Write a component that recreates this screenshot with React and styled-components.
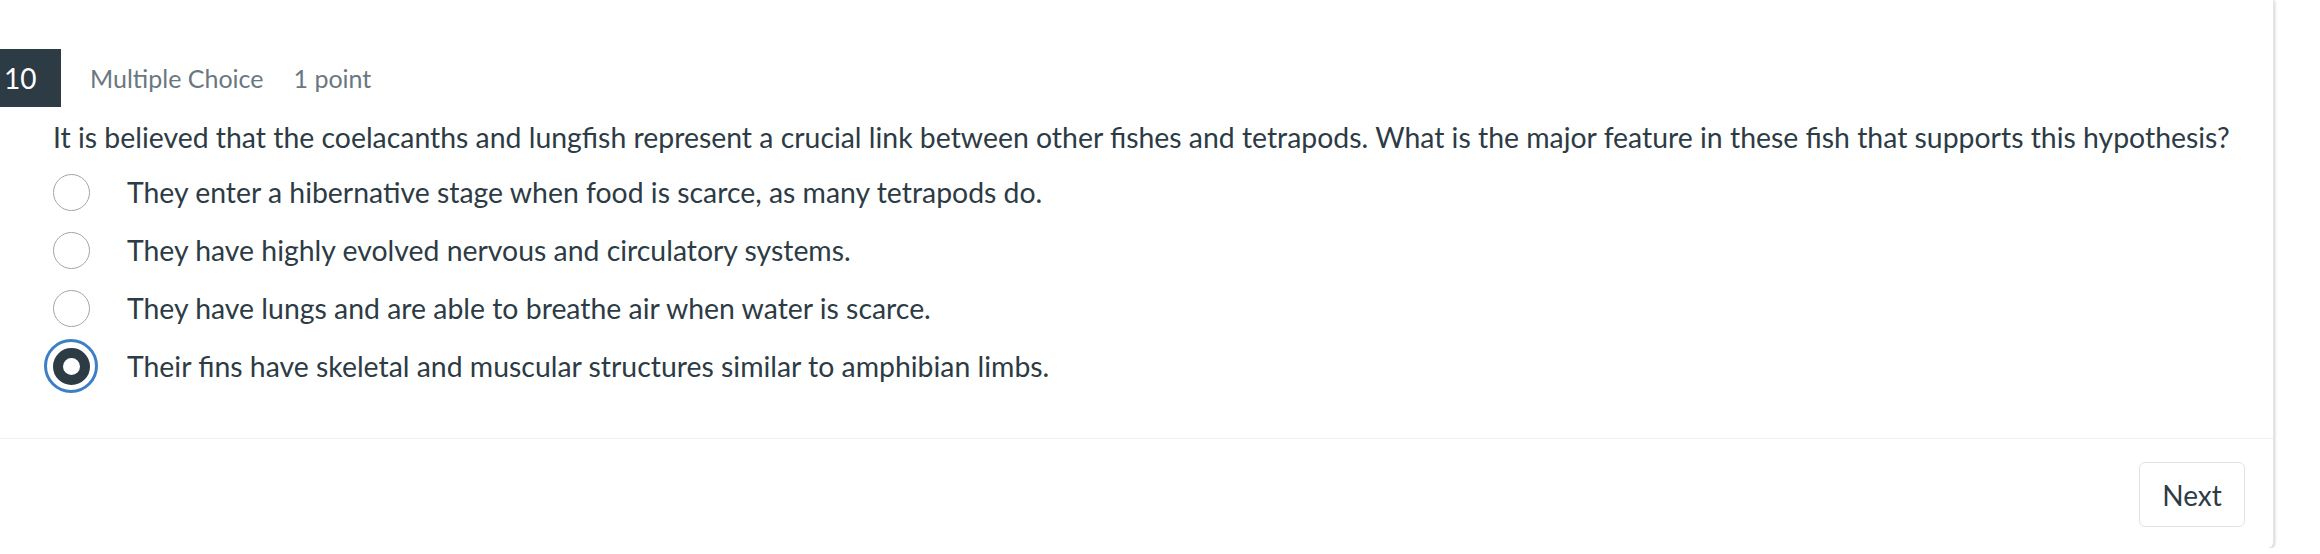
import React from "react";
import styled, { createGlobalStyle } from "styled-components";

const Global = createGlobalStyle`
  html, body { margin: 0; padding: 0; background: #ffffff; }
  body { font-family: Lato, "Open Sans", sans-serif; color: #2d3b45; }
`;

const Card = styled.div`
  width: 2274px;
  height: 548px;
  box-sizing: border-box;
  background: #fff;
  border-right: 1px solid #e4e4e4;
  border-bottom-right-radius: 6px;
  box-shadow: 1px 1px 3px rgba(0, 0, 0, 0.18);
  display: flex;
  flex-direction: column;
`;

const Body = styled.div`
  padding-top: 49px;
  height: 439px;
  box-sizing: border-box;
  border-bottom: 1px solid #efefef;
`;

const Header = styled.div`
  display: flex;
  align-items: center;
  height: 58px;
`;

const Number = styled.div`
  width: 61px;
  height: 58px;
  background: #2d3b45;
  color: #fff;
  font-size: 28px;
  display: flex;
  align-items: center;
  padding-left: 4px;
  box-sizing: border-box;
`;

const Meta = styled.span`
  color: #6b7780;
  font-size: 25px;
  margin-left: ${(p) => p.$gap}px;
`;

const Question = styled.p`
  margin: 11px 0 0 53px;
  font-size: 28.4px;
  line-height: 38px;
`;

const Options = styled.ul`
  list-style: none;
  margin: 7px 0 0 0;
  padding: 0;
  display: flex;
  flex-direction: column;
`;

const Option = styled.li`
  display: flex;
  align-items: center;
  height: 58px;
  font-size: 28.4px;
`;

const RadioSlot = styled.span`
  width: 54px;
  margin-left: 44px;
  margin-right: 29px;
  display: flex;
  align-items: center;
  justify-content: center;
`;

const Radio = styled.span`
  width: 37px;
  height: 37px;
  box-sizing: border-box;
  border-radius: 50%;
  border: 1.5px solid #a5a5a5;
  background: #fff;
`;

const SelectedRadio = styled.span`
  width: 54px;
  height: 54px;
  box-sizing: border-box;
  border-radius: 50%;
  border: 3px solid #3c7fc4;
  display: flex;
  align-items: center;
  justify-content: center;
  &::after {
    content: "";
    width: 37px;
    height: 37px;
    box-sizing: border-box;
    border-radius: 50%;
    border: 10px solid #2d3b45;
    background: #fff;
  }
`;

const Footer = styled.div`
  flex: 1;
  display: flex;
  justify-content: flex-end;
  align-items: flex-start;
  padding: 23px 28px 0 0;
`;

const NextButton = styled.button`
  width: 106px;
  height: 65px;
  border: 1px solid #e3e3e3;
  border-radius: 6px;
  background: #fff;
  color: #2d3b45;
  font-family: Lato, "Open Sans", sans-serif;
  font-size: 28px;
  cursor: pointer;
`;

const options = [
  "They enter a hibernative stage when food is scarce, as many tetrapods do.",
  "They have highly evolved nervous and circulatory systems.",
  "They have lungs and are able to breathe air when water is scarce.",
  "Their fins have skeletal and muscular structures similar to amphibian limbs.",
];

export default function App() {
  const selected = 3;
  return (
    <>
      <Global />
      <Card>
        <Body>
          <Header>
            <Number>10</Number>
            <Meta $gap={29}>Multiple Choice</Meta>
            <Meta $gap={30}>1 point</Meta>
          </Header>
          <Question>
            It is believed that the coelacanths and lungfish represent a crucial link between other fishes and tetrapods. What is the major feature in these fish that supports this hypothesis?
          </Question>
          <Options>
            {options.map((o, i) => (
              <Option key={i}>
                <RadioSlot>{i === selected ? <SelectedRadio /> : <Radio />}</RadioSlot>
                {o}
              </Option>
            ))}
          </Options>
        </Body>
        <Footer>
          <NextButton>Next</NextButton>
        </Footer>
      </Card>
    </>
  );
}
